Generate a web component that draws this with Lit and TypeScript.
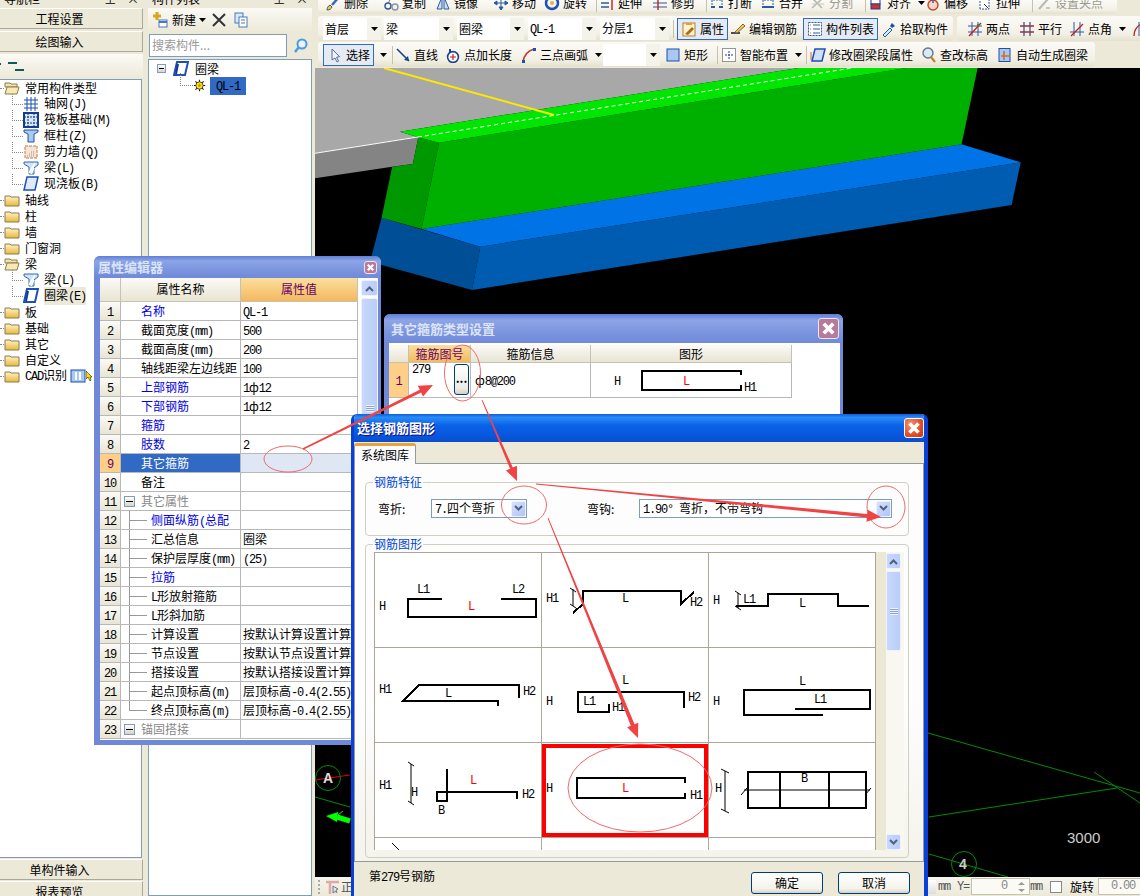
import { LitElement, html, svg, css, nothing } from "lit";
import { customElement } from "lit/decorators.js";

// latin runs get a narrow mono so they sit at 6px per char next to the 12px CJK
const lat = (text: string) =>
  text
    .split(/([\x20-\x7e°]+)/)
    .map((part, i) => (i % 2 ? html`<span class="m">${part}</span>` : part));

const ICONS: Record<string, any> = {
  brush: svg`<path d="M2 15c3 0 4-1 5-3l-2-2c-2 1-3 3-3 5z" fill="#f3c34d" stroke="#555"/><path d="M7 10 14 2" stroke="#3a66b8" stroke-width="2.5"/>`,
  scissor: svg`<circle cx="5" cy="11" r="3" fill="none" stroke="#33558f" stroke-width="1.4"/><circle cx="12" cy="12" r="3" fill="none" stroke="#8894a8" stroke-width="1.4"/><path d="M5 8 9 2" stroke="#777"/>`,
  mirror: svg`<path d="M7 2 2 14h5zM9 2l5 12H9z" fill="#cfe0f5" stroke="#2c5aa0"/>`,
  move: svg`<path d="M8 1v14M1 8h14M8 1 6 4h4zM8 15l-2-3h4zM1 8l3-2v4zM15 8l-3-2v4z" fill="#2c5aa0" stroke="#2c5aa0"/>`,
  rotate: svg`<circle cx="8" cy="8" r="6" fill="none" stroke="#1d4fb5" stroke-width="2.5"/><circle cx="8" cy="8" r="2" fill="#e9b23c"/>`,
  extend: svg`<path d="M2 4h8M2 8h8M2 12h8" stroke="#2c5aa0" stroke-width="1.4"/><path d="M13 1v14" stroke="#c02020" stroke-width="1.4"/>`,
  trim: svg`<path d="M1 4h14M1 8h14M1 12h14" stroke="#2c5aa0" stroke-width="1.2"/><path d="M6 1v14" stroke="#c02020" stroke-width="1.4"/>`,
  brk: svg`<path d="M2 12h4M10 12h4" stroke="#2c5aa0" stroke-width="2"/><path d="M3 10V5h10v5" fill="none" stroke="#2c5aa0" stroke-dasharray="2 1"/>`,
  join: svg`<path d="M2 12h12" stroke="#2c5aa0" stroke-width="2"/><path d="M3 10V5h10v5" fill="none" stroke="#2c5aa0" stroke-dasharray="2 1"/>`,
  split: svg`<path d="M2 13 13 3M3 4l9 9" stroke="#b8b8ae" stroke-width="1.6"/><path d="M2 9h12" stroke="#c8c8be"/>`,
  align: svg`<rect x="3" y="3" width="9" height="6" fill="#fff" stroke="#1d3f8f"/><rect x="3" y="9" width="9" height="5" fill="#d03030" stroke="#1d3f8f"/>`,
  offset: svg`<circle cx="8" cy="10" r="5" fill="#f8d9c8" stroke="#c04830" stroke-width="1.4"/><path d="M8 1v7" stroke="#2c5aa0" stroke-width="1.4"/>`,
  stretch: svg`<path d="M3 14V3h9v11z" fill="#fff" stroke="#2c5aa0" stroke-dasharray="2 1"/><path d="M7 9l4 4" stroke="#333"/>`,
  grip: svg`<path d="M3 14 12 4" stroke="#b8b8ae" stroke-width="2"/><path d="M10 13h4" stroke="#c8c8be" stroke-width="2"/>`,
  prop: svg`<rect x="2" y="2" width="12" height="13" fill="#fff3cf" stroke="#b08030"/><path d="M5 2h6v2H5z" fill="#e0a040"/><path d="M4 13 11 6l2 2-6 6z" fill="#b06a10"/>`,
  pencil: svg`<path d="M1 12h9" stroke="#222" stroke-width="1.6"/><path d="M5 11 13 3l2 2-8 7z" fill="#e9c46a" stroke="#8a6a20"/>`,
  list: svg`<rect x="1.5" y="1.5" width="13" height="13" fill="#fff" stroke="#2c5aa0" stroke-dasharray="2 1"/><path d="M6 4h7M6 8h7M6 12h7" stroke="#2c5aa0"/><path d="M3 4h1M3 8h1M3 12h1" stroke="#c08030"/>`,
  dropper: svg`<path d="M2 14 9 7l2 2-7 7z" fill="#cfe6fb" stroke="#2c5aa0"/><path d="M9 5l2-3 3 3-3 2z" fill="#1d4fb5"/>`,
  twopt: svg`<path d="M1 5h14M1 11h14M5 1v14M11 1v14" stroke="#2c5aa0"/><path d="M2 15 14 2" stroke="#c02020" stroke-width="1.3"/><rect x="10" y="3" width="2" height="2" fill="#2a9a2a"/>`,
  parallel: svg`<path d="M1 5h14M1 11h14" stroke="#c02020" stroke-width="1.3"/><path d="M5 1v14M11 1v14" stroke="#2c5aa0" stroke-width="1.3"/>`,
  ptangle: svg`<path d="M1 11h14M5 1v14M11 1v14" stroke="#2c5aa0"/><path d="M2 15 14 3" stroke="#c02020" stroke-width="1.3"/>`,
  arc3: svg`<path d="M3 15C3 8 8 2 15 2" fill="none" stroke="#c02020" stroke-width="1.3"/><path d="M8 1v14" stroke="#2c5aa0"/>`,
  cursor: svg`<path d="M5 2v11l3-2 2 4 1.6-.8-2-4 3-.5z" fill="#eef2fa" stroke="#5a6f90"/>`,
  line: svg`<path d="M2 2 14 14" stroke="#1d3f8f" stroke-width="1.6"/><path d="M14 14 9 13l4-4z" fill="#1d3f8f"/>`,
  ptadd: svg`<path d="M5 2v6" stroke="#1d3f8f" stroke-width="2"/><circle cx="8" cy="10" r="5.4" fill="#fff" stroke="#1d3f8f" stroke-width="1.6"/><path d="M8 7v6M5 10h6" stroke="#c02020" stroke-width="1.2"/>`,
  arc: svg`<path d="M2 15C3 8 6 4 13 2" fill="none" stroke="#c04030" stroke-width="1.8"/><rect x="1" y="13" width="3" height="3" fill="#1d4fb5"/><rect x="12" y="1" width="3" height="3" fill="#1d4fb5"/>`,
  rect: svg`<rect x="2" y="2" width="12" height="12" fill="#a8c8f0" stroke="#1d4fb5"/>`,
  smart: svg`<rect x="1.5" y="1.5" width="13" height="13" fill="#fff" stroke="#333" stroke-dasharray="1 1"/><path d="M8 4v8M4 8h8" stroke="#1d3f8f" stroke-dasharray="2 1"/>`,
  para: svg`<path d="M5 2h10l-3 12H2z" fill="#cfe0f5" stroke="#1d4fb5" stroke-width="1.5"/><path d="M1 5v8" stroke="#d06030"/>`,
  mag: svg`<circle cx="7" cy="6" r="5" fill="#dce8f5" stroke="#66788f" stroke-width="1.4"/><path d="M10 10l4 5" stroke="#b8862c" stroke-width="2.2"/>`,
  autogen: svg`<rect x="2" y="1.5" width="11" height="13" fill="#a8c8f0" stroke="#1d4fb5"/><path d="M7 4v9M4 9h9" stroke="#d07020" stroke-width="1.6"/>`,
  folder: svg`<path d="M1 4h5l1 1h8v9H1z" fill="url(#fold)" stroke="#8a7a50"/>`,
  folderOpen: svg`<path d="M1 3h5l1 1h6v3H1z" fill="#f3e3a8" stroke="#8a7a50"/><path d="M1 14l2-7h12l-2 7z" fill="#f7e9b0" stroke="#8a7a50"/>`,
  axis: svg`<path d="M1 4h14M1 8h14M1 12h14M4 1v14M8 1v14M12 1v14" stroke="#1d4fb5"/>`,
  raft: svg`<rect x="1" y="1" width="14" height="14" fill="#d8e6f8" stroke="#123e8a" stroke-width="2"/><path d="M1 5h14M1 11h14M5 1v14M11 1v14" stroke="#123e8a" stroke-dasharray="2 1"/>`,
  column: svg`<path d="M1 2h14v2l-4 2v8H5V6L1 4z" fill="#a8cbee" stroke="#1d4fb5"/>`,
  wall: svg`<rect x="2" y="2" width="12" height="12" fill="#f7e4d6" stroke="#c87840" stroke-dasharray="3 1"/><path d="M4 12h8M6 10h5M8 8h3" stroke="#999" stroke-dasharray="1 1"/>`,
  beam: svg`<path d="M1 2h14v3l-4 3v6H6V7L1 4z" fill="#cfe3f7" stroke="#2c6ab5"/><path d="M6 13 12 3M8 14l3-6" stroke="#fff" stroke-width="1.5"/>`,
  slab: svg`<path d="M4 1h11l-3 13H1z" fill="#dfeafa" stroke="#1d4fb5" stroke-width="1.5"/>`,
  ring: svg`<path d="M4 1h11l-3 13H1z" fill="#fff" stroke="#1d4fb5" stroke-width="2"/><path d="M3 13 5 3" stroke="#0d3a8f" stroke-width="2"/>`,
  gear: svg`<path d="M8 1v14M1 8h14M3 3l10 10M13 3 3 13" stroke="#222" stroke-width="1.4"/><circle cx="8" cy="8" r="4.500" fill="#ffe000" stroke="#333"/><circle cx="8" cy="8" r="1.500" fill="#a08a00"/>`,
  add: svg`<path d="M5 0v8M1 4h8" stroke="#d9a520" stroke-width="3"/><rect x="7" y="8" width="8" height="7" fill="#fff" stroke="#4b78b8"/><path d="M7 10h8" stroke="#4b78b8" stroke-width="2"/>`,
  cross: svg`<path d="M2 2 14 14M14 2 2 14" stroke="#333" stroke-width="2"/>`,
  dup: svg`<rect x="2" y="1" width="8" height="10" fill="#dbe8f8" stroke="#4b78b8"/><rect x="6" y="5" width="8" height="10" fill="#fff" stroke="#4b78b8"/><path d="M8 8h4M8 11h4" stroke="#4b78b8"/>`,
  search: svg`<circle cx="9" cy="6" r="4.500" fill="#e8f3fd" stroke="#4b9be0" stroke-width="2"/><path d="M6 9 2 14" stroke="#4b9be0" stroke-width="2.500"/>`,
  cad: svg`<rect x="1" y="2" width="14" height="12" fill="#a8c8f0" stroke="#1d4fb5"/><path d="M6 4v8M10 4v8" stroke="#fff" stroke-width="2"/>`,
  status: svg`<path d="M1 3h13M5 3v12" stroke="#e0a8a8" stroke-width="2.500"/><path d="M8 7v7l2-1.500 2 1-1-2.500 2-1z" fill="#dde3ee" stroke="#778"/>`,
};

const ic = (name: string, cls = "ic") =>
  html`<svg class=${cls} viewBox="0 0 16 16">${ICONS[name]}</svg>`;

const caret = html`<svg class="caret" viewBox="0 0 7 4"><path d="M0 0h7L3.500 4z" /></svg>`;

const chevron = (down: boolean) =>
  html`<svg class="chev" viewBox="0 0 9 7">
    <path d=${down ? "M1 1l3.500 3.500L8 1" : "M1 6l3.500-3.500L8 6"} fill="none" stroke="#4d6185" stroke-width="2" />
  </svg>`;

const spinner = html`<svg class="spn" viewBox="0 0 9 14"><path d="M4.500 2 8 5H1zM4.500 12 8 9H1z" fill="#999" /></svg>`;

type Tool = { i?: string; t?: string; w: number; sep?: boolean; caret?: boolean; on?: boolean; off?: boolean; sel?: string };

const ROW0: Tool[] = [
  { i: "brush", t: "删除", w: 58 }, { i: "scissor", t: "复制", w: 52 }, { i: "mirror", t: "镜像", w: 58 },
  { i: "move", t: "移动", w: 51 }, { i: "rotate", t: "旋转", w: 49 }, { sep: true, w: 6 },
  { i: "extend", t: "延伸", w: 53 }, { i: "trim", t: "修剪", w: 51 }, { sep: true, w: 6 },
  { i: "brk", t: "打断", w: 51 }, { i: "join", t: "合并", w: 50 }, { i: "split", t: "分割", w: 51, off: true }, { sep: true, w: 7 },
  { i: "align", t: "对齐", w: 57, caret: true }, { i: "offset", t: "偏移", w: 52 }, { i: "stretch", t: "拉伸", w: 51 }, { sep: true, w: 8 },
  { i: "grip", t: "设置夹点", w: 72, off: true },
];

const ROW1: Tool[] = [
  { sel: "首层", w: 58 }, { w: 3 }, { sel: "梁", w: 69 }, { w: 4 }, { sel: "圈梁", w: 67 }, { w: 4 },
  { sel: "QL-1", w: 68 }, { w: 4 }, { sel: "分层1", w: 69 }, { sep: true, w: 8 },
  { i: "prop", t: "属性", w: 51, on: true }, { w: 2 }, { i: "pencil", t: "编辑钢筋", w: 69 }, { w: 4 },
  { i: "list", t: "构件列表", w: 75, on: true }, { w: 3 }, { i: "dropper", t: "拾取构件", w: 69 },
];

const ROW1B: Tool[] = [
  { i: "twopt", t: "两点", w: 52 }, { i: "parallel", t: "平行", w: 50 },
  { i: "ptangle", t: "点角", w: 62, caret: true }, { i: "arc3", w: 18 },
];

const ROW2: Tool[] = [
  { i: "cursor", t: "选择", w: 51, on: true }, { w: 2 }, { t: "", w: 10, caret: true }, { w: 2 }, { sep: true, w: 7 },
  { i: "line", t: "直线", w: 50 }, { i: "ptadd", t: "点加长度", w: 76 }, { i: "arc", t: "三点画弧", w: 82, caret: true },
  { sel: "", w: 57 }, { w: 5 }, { i: "rect", t: "矩形", w: 48 }, { sep: true, w: 8 },
  { i: "smart", t: "智能布置", w: 81, caret: true }, { sep: true, w: 8 },
  { i: "para", t: "修改圈梁段属性", w: 111 }, { i: "mag", t: "查改标高", w: 76 }, { i: "autogen", t: "自动生成圈梁", w: 96 },
];

const NAV_TREE: { t: string; i: string; kind: string; cur?: boolean; cad?: boolean }[] = [
  { t: "常用构件类型", i: "folderOpen", kind: "root" },
  { t: "轴网(J)", i: "axis", kind: "kid" },
  { t: "筏板基础(M)", i: "raft", kind: "kid" },
  { t: "框柱(Z)", i: "column", kind: "kid" },
  { t: "剪力墙(Q)", i: "wall", kind: "kid" },
  { t: "梁(L)", i: "beam", kind: "kid" },
  { t: "现浇板(B)", i: "slab", kind: "kid" },
  { t: "轴线", i: "folder", kind: "root" },
  { t: "柱", i: "folder", kind: "root" },
  { t: "墙", i: "folder", kind: "root" },
  { t: "门窗洞", i: "folder", kind: "root" },
  { t: "梁", i: "folderOpen", kind: "root" },
  { t: "梁(L)", i: "beam", kind: "kid" },
  { t: "圈梁(E)", i: "ring", kind: "kid", cur: true },
  { t: "板", i: "folder", kind: "root" },
  { t: "基础", i: "folder", kind: "root" },
  { t: "其它", i: "folder", kind: "root" },
  { t: "自定义", i: "folder", kind: "root" },
  { t: "CAD识别", i: "folder", kind: "root", cad: true },
];

// kind: b = blue label, pick = current row, group = collapsible heading, c = child of heading, last = last child
const PROPS: [string, string, string][] = [
  ["名称", "QL-1", "b"],
  ["截面宽度(mm)", "500", ""],
  ["截面高度(mm)", "200", ""],
  ["轴线距梁左边线距", "100", ""],
  ["上部钢筋", "1ф12", "b"],
  ["下部钢筋", "1ф12", "b"],
  ["箍筋", "", "b"],
  ["肢数", "2", "b"],
  ["其它箍筋", "", "pick"],
  ["备注", "", ""],
  ["其它属性", "", "group"],
  ["侧面纵筋(总配", "", "b c"],
  ["汇总信息", "圈梁", "c"],
  ["保护层厚度(mm)", "(25)", "c"],
  ["拉筋", "", "b c"],
  ["L形放射箍筋", "", "c"],
  ["L形斜加筋", "", "c"],
  ["计算设置", "按默认计算设置计算", "c"],
  ["节点设置", "按默认节点设置计算", "c"],
  ["搭接设置", "按默认搭接设置计算", "c"],
  ["起点顶标高(m)", "层顶标高-0.4(2.55)", "c"],
  ["终点顶标高(m)", "层顶标高-0.4(2.55)", "c last"],
  ["锚固搭接", "", "group"],
];

type Shape = { bold?: string; thin?: string; texts?: [string, number, number, boolean?][]; sel?: boolean };

const SHAPES: Shape[] = [
  { bold: "M67 46H33V64H161V46H126", texts: [["H", 4, 54], ["L1", 42, 37], ["L2", 137, 37], ["L", 93, 54, true]] },
  { bold: "M31 60 41 51V38H139V51L152 39", thin: "M31 36V53M28 35l6 4M28 51l6 4", texts: [["H1", 4, 46], ["L", 80, 46], ["H2", 148, 50]] },
  { bold: "M27 53H59V41H129V53H160", thin: "M29 40V55M26 38l6 4M26 53l6 4", texts: [["H", 4, 48], ["L1", 34, 47], ["L", 90, 51]] },
  { bold: "M144 50V37H44L28 53H123V58", texts: [["H1", 4, 42], ["L", 70, 46], ["H2", 148, 44]] },
  { bold: "M142 60V44H36V64H67V56", texts: [["H", 4, 54], ["L", 80, 33], ["L1", 41, 54], ["H1", 70, 60], ["H2", 146, 50]] },
  { bold: "M114 67H35V42H161V61H86", texts: [["H", 4, 54], ["L", 90, 34], ["L1", 105, 52]] },
  { bold: "M72 26V58H62V49H142V56", thin: "M36 21V60M33 19l6 4M33 58l6 4", texts: [["H1", 4, 43], ["H", 36, 50], ["L", 95, 38, true], ["H2", 147, 52], ["B", 63, 68]] },
  { bold: "M143 40V35H35V55H143V50", sel: true, texts: [["H", 4, 46], ["L", 80, 46, true], ["H1", 148, 53]] },
  { bold: "M39 29H157V65H39ZM71 29V65M120 29V65", thin: "M16 28V68M12 26l8 4M12 66l8 4M35 47H161M32 52l6-7M156 52l6-7", texts: [["H", 6, 46], ["B", 92, 36]] },
  { thin: "M17 5l8 8" },
  {},
  {},
];

// tapered arrow with a filled head, the way the red markups in the shot look
const arrow = (x0: number, y0: number, x1: number, y1: number, w0: number, w1: number, hl = 14, hw = 6) => {
  const len = Math.hypot(x1 - x0, y1 - y0);
  const ux = (x1 - x0) / len;
  const uy = (y1 - y0) / len;
  const nx = -uy;
  const ny = ux;
  const bx = x1 - ux * hl;
  const by = y1 - uy * hl;
  const p = [
    [x0 + (nx * w0) / 2, y0 + (ny * w0) / 2],
    [bx + (nx * w1) / 2, by + (ny * w1) / 2],
    [bx + nx * hw, by + ny * hw],
    [x1, y1],
    [bx - nx * hw, by - ny * hw],
    [bx - (nx * w1) / 2, by - (ny * w1) / 2],
    [x0 - (nx * w0) / 2, y0 - (ny * w0) / 2],
  ];
  return svg`<polygon class="mark-fill" points=${p.map((q) => q.join(",")).join(" ")} />`;
};

@customElement("app-root")
export class AppRoot extends LitElement {
  static styles = css`
    :host {
      display: block;
      position: relative;
      width: 1140px;
      height: 896px;
      overflow: hidden;
      background: #ece9d8;
      color: #000;
      font: 12px/16px "Noto Sans CJK SC", "Liberation Sans", sans-serif;
    }
    .m {
      font-family: "Liberation Mono", monospace;
      font-size: 12px;
      letter-spacing: -1.2px;
    }
    .ic {
      width: 16px;
      height: 16px;
      flex: none;
    }
    .caret {
      width: 7px;
      height: 4px;
      flex: none;
      fill: #000;
    }
    .chev {
      width: 9px;
      height: 7px;
    }
    .app {
      display: grid;
      grid-template-columns: 143px 5px 164px 3px 825px;
      height: 896px;
    }

    /* docked panels */
    .panel {
      display: flex;
      flex-direction: column;
      min-height: 0;
      overflow: hidden;
    }
    .dock-title {
      display: flex;
      height: 8px;
      flex: none;
      overflow: hidden;
      line-height: 12px;
      padding-left: 4px;
    }
    .dock-title span {
      margin-top: -7px;
    }
    .dock-title b {
      font-weight: normal;
      margin: -7px 0 0 auto;
      word-spacing: 8px;
      padding-right: 4px;
    }
    .navbtn {
      height: 21px;
      flex: none;
      line-height: 20px;
      text-align: center;
      padding-right: 23px;
      border-top: 1px solid #fff;
      border-bottom: 1px solid #aca899;
      border-right: 1px solid #aca899;
      margin-bottom: 1px;
      box-sizing: border-box;
    }
    .navtop .navbtn {
      margin-bottom: 2px;
    }
    .nav-tools {
      height: 25px;
      flex: none;
      display: flex;
      align-items: center;
      background: linear-gradient(#fbfaf5, #ece9d8);
    }
    .nav-tools svg {
      width: 24px;
      height: 10px;
    }
    .tree {
      flex: 1;
      min-height: 0;
      background: #fff;
      border: 1px solid #7f9db9;
      border-left: none;
      margin-right: 1px;
      padding-top: 0;
      overflow: hidden;
    }
    .node {
      position: relative;
      display: flex;
      align-items: center;
      height: 16px;
      padding-left: 4px;
      gap: 5px;
      white-space: nowrap;
    }
    .node.kid {
      padding-left: 23px;
    }
    .node.kid::before {
      content: "";
      position: absolute;
      left: 12px;
      top: -2px;
      width: 10px;
      height: 10px;
      border-left: 1px dotted #888;
      border-bottom: 1px dotted #888;
    }
    .node.root::before {
      content: "";
      position: absolute;
      left: 0;
      top: 8px;
      width: 4px;
      border-top: 1px dotted #888;
    }
    .node .cur {
      background: #ece9d8;
    }
    .cad-mark {
      display: flex;
      align-items: center;
      margin-left: -2px;
    }
    .cad-mark svg + svg {
      width: 6px;
      height: 10px;
    }
    .navbottom {
      flex: none;
      padding-top: 1px;
      height: 37px;
    }

    .list-tools {
      height: 24px;
      flex: none;
      display: flex;
      align-items: center;
      padding-left: 4px;
      background: linear-gradient(#fbfaf5, #ece9d8);
    }
    .list-tools .new {
      margin: 0 3px 0 4px;
    }
    .list-tools .del {
      display: flex;
      margin: 0 6px 0 5px;
    }
    .search {
      height: 25px;
      flex: none;
      display: flex;
      align-items: center;
      margin-top: 1px;
    }
    .search .box {
      width: 138px;
      height: 23px;
      box-sizing: border-box;
      border: 1px solid #7f9db9;
      background: #fff;
      color: #999;
      line-height: 20px;
      padding-left: 2px;
      margin-left: 1px;
    }
    .search svg {
      margin-left: 6px;
    }
    .list-tree {
      flex: 1;
      background: #fff;
      border: 1px solid #7f9db9;
      margin-top: 1px;
    }
    .list-root,
    .list-kid {
      display: flex;
      align-items: center;
      height: 17px;
    }
    .list-root {
      padding-left: 8px;
    }
    .list-root .ic {
      margin: 0 6px 0 7px;
    }
    .minus {
      width: 9px;
      height: 9px;
      flex: none;
      box-sizing: border-box;
      border: 1px solid #7f9db9;
      background: linear-gradient(#fff, #d8d4c8) no-repeat;
      position: relative;
    }
    .minus::after {
      content: "";
      position: absolute;
      left: 1px;
      right: 1px;
      top: 3px;
      border-top: 1px solid #000;
    }
    .list-kid {
      position: relative;
      padding-left: 44px;
      gap: 4px;
    }
    .list-kid .ic {
      width: 13px;
      height: 13px;
    }
    .list-kid::before {
      content: "";
      position: absolute;
      left: 31px;
      top: -4px;
      width: 12px;
      height: 12px;
      border-left: 1px dotted #888;
      border-bottom: 1px dotted #888;
    }
    .list-kid span {
      background: #316ac5;
      padding: 0 3px;
      line-height: 16px;
    }

    /* toolbars */
    .work {
      display: flex;
      flex-direction: column;
      min-width: 0;
      overflow: hidden;
    }
    .tools {
      height: 68px;
      flex: none;
      overflow: hidden;
    }
    .bars {
      display: flex;
      gap: 4px;
      margin-left: 3px;
    }
    .bar {
      display: flex;
      align-items: center;
      height: 25px;
      flex: none;
      padding-left: 5px;
      border-radius: 3px;
      background: linear-gradient(#fbfaf6, #f3f1e6 70%, #e4e1cf);
      white-space: nowrap;
    }
    .bar0 {
      height: 14px;
      width: 792px;
      margin: 0 0 2px 3px;
      padding-left: 7px;
      overflow: hidden;
      border-radius: 0 0 3px 3px;
      align-items: flex-start;
    }
    .bar0 .tool {
      height: 18px;
      margin-top: -6px;
    }
    .bar0 .sep {
      height: 12px;
    }
    .row1-main {
      width: 630px;
    }
    .row1-side {
      flex: 1;
      padding-left: 10px;
      overflow: hidden;
      border-radius: 3px 0 0 3px;
    }
    .row2 {
      margin: 1px 0 0 3px;
      width: 772px;
    }
    .tool {
      display: flex;
      align-items: center;
      gap: 3px;
      flex: none;
      box-sizing: border-box;
      height: 22px;
    }
    .tool.on {
      border: 1px solid #316ac5;
      background: #e6ebf3;
      padding-left: 3px;
    }
    .tool.off {
      color: #9a9a90;
    }
    .tool .caret {
      margin-left: 4px;
    }
    .sep {
      flex: none;
      height: 18px;
      position: relative;
    }
    .sep::after {
      content: "";
      position: absolute;
      left: 50%;
      top: 0;
      bottom: 0;
      border-left: 1px solid #c5c2b0;
    }
    .sel {
      display: flex;
      align-items: center;
      flex: none;
      height: 22px;
      background: #fff;
      padding-left: 2px;
      box-sizing: border-box;
    }
    .sel span {
      flex: 1;
    }
    .sel i {
      width: 14px;
      height: 100%;
      display: flex;
      align-items: center;
      justify-content: center;
      background: #f4f3ea;
    }

    /* 3d view */
    .scene {
      display: block;
      width: 825px;
      height: 809px;
      flex: none;
      background: #000;
    }
    .scene text {
      font-family: "Liberation Sans", sans-serif;
    }
    .status {
      flex: 1;
      display: flex;
      align-items: center;
      background: linear-gradient(#f6f5ee, #ece9d8);
      padding-left: 3px;
      color: #555;
      overflow: hidden;
    }
    .status .ggrip {
      width: 2px;
      height: 14px;
      flex: none;
      border-left: 2px dotted #aaa;
      margin-right: 3px;
    }
    .tail {
      margin-left: auto;
      width: 212px;
      flex: none;
      display: flex;
      align-items: center;
      overflow: hidden;
      white-space: nowrap;
    }
    .tail .spin {
      width: 8px;
      height: 14px;
      background: linear-gradient(#fff, #ddd);
      flex: none;
    }
    .tail .u1 {
      margin: 0 7px 0 2px;
    }
    .tail .y {
      margin-right: 2px;
    }
    .tail .field {
      flex: none;
      height: 17px;
      box-sizing: border-box;
      border: 1px solid #c5c2b0;
      background: #fbfaf5;
      display: flex;
      align-items: center;
      justify-content: flex-end;
      color: #888;
      line-height: 15px;
      padding-right: 3px;
    }
    .tail .f1 {
      width: 59px;
    }
    .tail .f2 {
      width: 60px;
      margin-left: 4px;
    }
    .spn {
      width: 9px;
      height: 14px;
      margin-left: 10px;
      flex: none;
    }
    .tail .u2 {
      margin-right: 8px;
    }
    .tail .check {
      width: 12px;
      height: 12px;
      flex: none;
      border: 1px solid #888;
      background: #fff;
      box-sizing: border-box;
      margin-right: 8px;
    }
    .tail .rot {
      color: #000;
    }

    /* floating windows */
    .win {
      position: absolute;
      box-sizing: border-box;
      display: flex;
      flex-direction: column;
      border-radius: 6px 6px 0 0;
      overflow: hidden;
    }
    .win-title {
      flex: none;
      display: flex;
      align-items: center;
      justify-content: space-between;
      font-weight: bold;
      white-space: nowrap;
    }
    .inactive {
      background: #6f88da;
    }
    .inactive .win-title {
      background: linear-gradient(#5f7ed8, #8da5e6 22%, #7d96df 60%, #7089d9);
      color: #dbe3f7;
    }
    .x {
      display: block;
      flex: none;
      box-sizing: border-box;
      border-radius: 3px;
      border: 1px solid #e8e8f4;
      background: #b97a98;
    }
    .x path {
      stroke: #fff;
      stroke-width: 2.4;
    }

    .props {
      left: 94px;
      top: 256px;
      width: 287px;
      height: 489px;
      padding: 0 3px 5px 6px;
    }
    .props .win-title {
      height: 22px;
      margin: 0 -3px 0 -6px;
      padding: 0 4px 0 4px;
      font-size: 13px;
    }
    .props .x {
      width: 13px;
      height: 13px;
    }
    .props-body {
      flex: 1;
      min-height: 0;
      display: flex;
      background: #fff;
    }
    .ptable {
      width: 258px;
      flex: none;
      display: grid;
      grid-template-columns: 21px 120px 117px;
      grid-template-rows: 24px;
      grid-auto-rows: 19px;
    }
    .cell {
      position: relative;
      box-sizing: border-box;
      border-right: 1px solid #b8b8b8;
      border-bottom: 1px solid #b8b8b8;
      line-height: 18px;
      white-space: nowrap;
      overflow: hidden;
    }
    .hd {
      background: linear-gradient(#fbfaf5, #e8e5d4);
      text-align: center;
      line-height: 22px;
      border-color: #c5c2b0;
    }
    .hd.act {
      background: linear-gradient(#fbdf9d, #f4b860);
      color: #660066;
    }
    .num {
      background: linear-gradient(#fbfaf5, #e8e5d4);
      text-align: center;
    }
    .num.act {
      background: #ffcf87;
      color: #660066;
    }
    .name {
      padding-left: 20px;
    }
    .name.b {
      color: #0000e0;
    }
    .name.pick {
      background: #316ac5;
      color: #fff;
    }
    .name.c {
      padding-left: 30px;
    }
    .name.c::before {
      content: "";
      position: absolute;
      left: 8px;
      top: -1px;
      width: 17px;
      height: 10px;
      border-left: 1px solid #999;
      border-bottom: 1px solid #999;
    }
    .name.c:not(.last)::after {
      content: "";
      position: absolute;
      left: 8px;
      top: 9px;
      bottom: -1px;
      border-left: 1px solid #999;
    }
    .name.group {
      display: flex;
      align-items: center;
      gap: 6px;
      padding-left: 3px;
      color: #888;
    }
    .name.group .minus {
      width: 11px;
      height: 11px;
    }
    .name.group .minus::after {
      top: 4px;
    }
    .val {
      padding-left: 2px;
    }
    .val.pick {
      background: #dfe7f5;
    }
    .sbar {
      flex: none;
      display: flex;
      flex-direction: column;
      align-items: stretch;
      gap: 2px;
      box-sizing: border-box;
    }
    .sbtn,
    .thumb {
      box-sizing: border-box;
      border: 1px solid #eef2fd;
      border-radius: 2px;
      background: linear-gradient(90deg, #c9d8fb, #b9cdf9);
      flex: none;
    }
    .sbtn {
      height: 16px;
      display: flex;
      align-items: center;
      justify-content: center;
    }
    .thumb {
      display: flex;
      align-items: center;
      justify-content: center;
    }
    .thumb span {
      width: 8px;
      height: 7px;
      background: repeating-linear-gradient(#eef3fe 0 1px, #8aa2d8 1px 2px);
    }
    .props .sbar {
      width: 17px;
      margin: 2px 0 0 3px;
    }
    .props .thumb {
      height: 220px;
    }

    .stirrup {
      left: 384px;
      top: 314px;
      width: 459px;
      height: 200px;
      padding: 0 3px 0 5px;
      background: #7089d9;
    }
    .stirrup .win-title {
      height: 29px;
      margin: 0 -3px 0 -5px;
      padding: 0 4px 0 7px;
      font-size: 13px;
    }
    .stirrup .x {
      width: 21px;
      height: 21px;
    }
    .stirrup-body {
      flex: 1;
      background: #fff;
      padding-top: 2px;
    }
    .stable {
      display: grid;
      grid-template-columns: 20px 62px 120px 201px;
      grid-template-rows: 18px 35px;
    }
    .stable .hd {
      line-height: 17px;
    }
    .stable .num {
      background: #ffcf87;
      color: #660066;
      line-height: 33px;
    }
    .code {
      display: flex;
      padding: 0 1px 0 3px;
      line-height: 14px;
    }
    .more {
      margin: 1px 0 0 auto;
      width: 15px;
      height: 31px;
      box-sizing: border-box;
      border: 1px solid #003c74;
      border-radius: 3px;
      background: linear-gradient(#fff, #ecebe5 80%, #d6d0c5);
      font-weight: bold;
      text-align: center;
      line-height: 26px;
    }
    .info {
      padding-left: 4px;
      line-height: 33px;
    }
    .thumbshape {
      display: block;
      width: 200px;
      height: 34px;
    }
    .thumbshape text,
    .cellbox text {
      font: 12px "Liberation Mono", monospace;
      letter-spacing: -1.2px;
      dominant-baseline: central;
    }

    .picker {
      left: 351px;
      top: 414px;
      width: 577px;
      height: 482px;
      background: #ece9d8;
      border: solid #0a3fd8;
      border-width: 0 4px 0 3px;
    }
    .picker .win-title {
      height: 28px;
      margin: 0 -4px 0 -3px;
      padding: 0 4px 0 6px;
      font-size: 13px;
      color: #fff;
      text-shadow: 1px 1px #0f1089;
      background: linear-gradient(#0a5de0, #2a8cf5 12%, #0a63e8 40%, #0755dd 80%, #0a4ec8);
    }
    .picker .x {
      width: 20px;
      height: 20px;
      border: 1px solid #fff;
      background: radial-gradient(circle at 30% 30%, #f0926e, #dd4a22 65%, #c23a15);
      margin-right: 0;
    }
    .tabs {
      flex: none;
      height: 21px;
      display: flex;
      align-items: flex-end;
    }
    .tab {
      position: relative;
      width: 62px;
      height: 21px;
      box-sizing: border-box;
      border: 1px solid #919b9c;
      border-top: 3px solid #e8a33d;
      border-bottom: none;
      border-radius: 3px 3px 0 0;
      background: #fcfcfe;
      text-align: center;
      line-height: 17px;
      margin-bottom: -1px;
      z-index: 1;
    }
    .tabpanel {
      flex: none;
      height: 399px;
      box-sizing: border-box;
      border: 1px solid #919b9c;
      background: linear-gradient(#fdfdfe 60%, #f4f3ec);
      padding: 12px 14px 0 10px;
    }
    fieldset {
      margin: 0;
      padding: 0;
      border: 1px solid #d0d0bf;
      border-radius: 4px;
      min-width: 0;
    }
    legend {
      color: #0046d5;
      padding: 0 1px;
      margin-left: 7px;
      line-height: 12px;
      height: 12px;
    }
    .feat {
      height: 60px;
      box-sizing: border-box;
    }
    .feat-row {
      display: flex;
      align-items: center;
      height: 19px;
      margin: 11px 0 0 12px;
    }
    .feat-row label {
      width: 53px;
      flex: none;
    }
    .feat-row label.second {
      margin-left: 60px;
      width: 52px;
    }
    .combo {
      display: flex;
      align-items: center;
      height: 19px;
      box-sizing: border-box;
      border: 1px solid #7f9db9;
      background: #fff;
      padding-left: 3px;
    }
    .combo span {
      flex: 1;
    }
    .combo i {
      width: 15px;
      height: 16px;
      display: flex;
      align-items: center;
      justify-content: center;
      border: 1px solid #eef2fd;
      box-sizing: border-box;
      border-radius: 2px;
      background: linear-gradient(135deg, #d6e1fd, #afc4f7);
    }
    .lib {
      height: 320px;
      box-sizing: border-box;
      margin-top: 2px;
    }
    .lib-row {
      display: flex;
      padding: 2px 0 0 8px;
    }
    .gallery {
      width: 502px;
      height: 298px;
      flex: none;
      overflow: hidden;
      display: grid;
      grid-template-columns: repeat(3, 167px);
      grid-auto-rows: 95px;
      border-right: 1px solid #aca899;
      background: #fff;
      box-sizing: border-box;
    }
    .cellbox {
      position: relative;
      border-left: 1px solid #aca899;
      border-top: 1px solid #aca899;
      box-sizing: border-box;
    }
    .cellbox svg {
      display: block;
      width: 166px;
      height: 94px;
    }
    .cellbox.picked::after {
      content: "";
      position: absolute;
      inset: 1px 0 0 0;
      border: 4px solid #f00;
    }
    .bold {
      fill: none;
      stroke: #000;
      stroke-width: 2;
      shape-rendering: crispEdges;
    }
    .thin {
      fill: none;
      stroke: #000;
    }
    .redtxt {
      fill: #f00;
    }
    .lib-track {
      width: 28px;
      height: 298px;
      flex: none;
      display: flex;
      background: linear-gradient(90deg, #ebe8d6 10px, #f8f7f0 10px);
      padding-top: 1px;
      box-sizing: border-box;
    }
    .lib-track .sbar {
      width: 15px;
      height: 100%;
      margin-left: 10px;
    }
    .lib-track .sbtn {
      height: 16px;
    }
    .lib-track .thumb {
      height: 80px;
    }
    .lib-track .sbtn.end {
      margin-top: auto;
    }
    .foot {
      flex: 1;
      display: flex;
      align-items: flex-start;
      padding: 10px 14px 0 15px;
      gap: 15px;
    }
    .foot span {
      margin: -4px auto 0 0;
    }
    .foot button {
      width: 72px;
      height: 22px;
      padding: 0;
      border: 1px solid #003c74;
      border-radius: 3px;
      background: linear-gradient(#fff, #f3f2ea 80%, #d6d0c5);
      font: inherit;
      line-height: 18px;
      color: #000;
    }

    /* red markups drawn over everything */
    .marks {
      position: absolute;
      left: 0;
      top: 0;
      width: 1140px;
      height: 896px;
      pointer-events: none;
    }
    .marks ellipse {
      fill: none;
      stroke: #ee6a6a;
    }
    .mark-fill {
      fill: #f04444;
    }
  `;

  renderTool(t: Tool) {
    if (t.sep) return html`<div class="sep" style="width:${t.w}px"></div>`;
    if (t.sel !== undefined) {
      return html`<div class="sel" style="width:${t.w}px"><span>${lat(t.sel)}</span><i>${caret}</i></div>`;
    }
    if (!t.i && !t.caret) return html`<div style="width:${t.w}px;flex:none"></div>`;
    return html`<div class="tool ${t.on ? "on" : ""} ${t.off ? "off" : ""}" style="width:${t.w}px">
      ${t.i ? ic(t.i) : nothing}${t.t ? html`<span>${t.t}</span>` : nothing}${t.caret ? caret : nothing}
    </div>`;
  }

  renderNav() {
    return html`<div class="panel">
      <div class="dock-title"><span>导航栏</span><b>⊥ ×</b></div>
      <div class="navtop">
        <div class="navbtn">工程设置</div>
        <div class="navbtn">绘图输入</div>
      </div>
      <div class="nav-tools">
        <svg viewBox="0 0 24 10"><path d="M0 2h1M8 1h9M15 8h9" stroke="#0e5a5a" stroke-width="2" /></svg>
      </div>
      <div class="tree">
        ${NAV_TREE.map(
          (n) => html`<div class="node ${n.kind}">
            ${ic(n.i)}<span class=${n.cur ? "cur" : ""}>${lat(n.t)}</span>
            ${n.cad
              ? html`<span class="cad-mark">${ic("cad")}<svg viewBox="0 0 6 10"><path d="M0 0v8l2-2 2 4 1-1-1-3h2z" fill="#ffd800" stroke="#000" stroke-width=".5" /></svg></span>`
              : nothing}
          </div>`
        )}
      </div>
      <div class="navbottom">
        <div class="navbtn">单构件输入</div>
        <div class="navbtn">报表预览</div>
      </div>
    </div>`;
  }

  renderList() {
    return html`<div class="panel">
      <div class="dock-title"><span>构件列表</span><b>⊥ ×</b></div>
      <div class="list-tools">
        ${ic("add")}<span class="new">新建</span>${caret}
        <span class="del">${ic("cross")}</span>${ic("dup")}
      </div>
      <div class="search"><div class="box">搜索构件...</div>${ic("search")}</div>
      <div class="list-tree">
        <div class="list-root"><i class="minus"></i>${ic("ring")}<span>圈梁</span></div>
        <div class="list-kid">${ic("gear")}<span>${lat("QL-1")}</span></div>
      </div>
    </div>`;
  }

  renderScene() {
    return html`<svg class="scene" viewBox="315 68 825 809">
      <g transform="translate(315 60) scale(.4592 .3333)">
        <polygon points="0,24 1053,24 185,215 225,232 0,280" fill="#a8a8a8" />
        <polygon points="0,280 225,232 213,312 168,320 0,355" fill="#848484" />
        <polygon points="145,473 360,560 342,690 120,605" fill="#004f96" />
        <polygon points="360,560 1537,307 1517,435 342,690" fill="#005cb0" />
        <polygon points="232,507 1408,253 1537,307 360,560" fill="#0073e6" />
        <polygon points="225,232 270,248 232,507 145,473 168,320 213,312" fill="#009800" />
        <polygon points="270,248 1288,24 1443,24 1408,253 232,507" fill="#00b000" />
        <polygon points="185,215 1053,24 1288,24 270,248 225,232" fill="#00e600" />
      </g>
      <path d="M315 153.300 418 137" stroke="#fff" />
      <path d="M418 137 852 68" stroke="#fff" stroke-dasharray="4 3" />
      <path d="M384 68 554 115" stroke="#ffe800" stroke-width="2" />

      <g fill="none" stroke="#008c00">
        <path d="M928 733 1140 793M929 817 1117 788M1094 772 1140 803M929 854 1008 877M315 797 350 807" />
        <circle cx="964" cy="864" r="12.500" />
        <circle cx="328" cy="778" r="12.500" />
      </g>
      <path d="M315 780 350 775" stroke="#e00000" />
      <text x="959" y="869" font-size="14" font-weight="bold" fill="#ccc">4</text>
      <text x="323" y="783" font-size="14" font-weight="bold" fill="#ddd">A</text>
      <text x="1067" y="843" font-size="15" fill="#ccc">3000</text>
      <polygon points="326,816 338,812 337,822" fill="#0f0" />
      <path d="M337 817 350 821" stroke="#0f0" stroke-width="5" />
      <path d="M338 815 343 811" stroke="#0f0" />
    </svg>`;
  }

  renderStatus() {
    return html`<div class="status">
      <i class="ggrip"></i>${ic("status")}<span>正</span>
      <div class="tail">
        <i class="spin"></i><span class="m u1">mm</span>
        <span class="m y">Y=</span>
        <span class="field f1"><span class="m">0</span>${spinner}</span>
        <span class="m u2">mm</span>
        <i class="check"></i><span class="rot">旋转</span>
        <span class="field f2"><span class="m">0.00</span>${spinner}</span>
      </div>
    </div>`;
  }

  renderClose() {
    return html`<svg class="x" viewBox="0 0 12 12"><path d="M3 3l6 6M9 3l-6 6" /></svg>`;
  }

  renderProps() {
    return html`<div class="win inactive props">
      <div class="win-title"><span>属性编辑器</span>${this.renderClose()}</div>
      <div class="props-body">
        <div class="ptable">
          <div class="cell hd"></div>
          <div class="cell hd">属性名称</div>
          <div class="cell hd act">属性值</div>
          ${PROPS.map(([name, value, kind], i) => {
            const pick = kind === "pick";
            const group = kind === "group";
            return html`
              <div class="cell num ${pick ? "act" : ""}"><span class="m">${i + 1}</span></div>
              <div class="cell name ${kind}">
                ${group ? html`<i class="minus"></i>` : nothing}${lat(name)}
              </div>
              <div class="cell val ${pick ? "pick" : ""}">${lat(value)}</div>
            `;
          })}
        </div>
        <div class="sbar">
          <div class="sbtn">${chevron(false)}</div>
          <div class="thumb"><span></span></div>
        </div>
      </div>
    </div>`;
  }

  renderStirrup() {
    return html`<div class="win inactive stirrup">
      <div class="win-title"><span>其它箍筋类型设置</span>${this.renderClose()}</div>
      <div class="stirrup-body">
        <div class="stable">
          <div class="cell hd"></div>
          <div class="cell hd act">箍筋图号</div>
          <div class="cell hd">箍筋信息</div>
          <div class="cell hd">图形</div>
          <div class="cell num"><span class="m">1</span></div>
          <div class="cell code"><span class="m">279</span><div class="more">...</div></div>
          <div class="cell info">${lat("ф8@200")}</div>
          <div class="cell">
            <svg class="thumbshape" viewBox="0 0 200 34">
              <path class="bold" d="M150 12V8H51V27H150V22" />
              <text x="23" y="19">H</text>
              <text class="redtxt" x="92" y="19">L</text>
              <text x="153" y="25">H1</text>
            </svg>
          </div>
        </div>
      </div>
    </div>`;
  }

  renderPicker() {
    return html`<div class="win picker">
      <div class="win-title"><span>选择钢筋图形</span>${this.renderClose()}</div>
      <div class="tabs"><div class="tab">系统图库</div></div>
      <div class="tabpanel">
        <fieldset class="feat">
          <legend>钢筋特征</legend>
          <div class="feat-row">
            <label>弯折:</label>
            <div class="combo" style="width:96px"><span>${lat("7.四个弯折")}</span><i>${chevron(true)}</i></div>
            <label class="second">弯钩:</label>
            <div class="combo" style="width:253px"><span>${lat("1.90° 弯折，不带弯钩")}</span><i>${chevron(true)}</i></div>
          </div>
        </fieldset>
        <fieldset class="lib">
          <legend>钢筋图形</legend>
          <div class="lib-row">
            <div class="gallery">
              ${SHAPES.map(
                (s) => html`<div class="cellbox ${s.sel ? "picked" : ""}">
                  <svg viewBox="0 0 166 94">
                    ${s.thin ? svg`<path class="thin" d=${s.thin} />` : nothing}
                    ${s.bold ? svg`<path class="bold" d=${s.bold} />` : nothing}
                    ${(s.texts ?? []).map(
                      ([t, x, y, red]) => svg`<text class=${red ? "redtxt" : ""} x=${x} y=${y}>${t}</text>`
                    )}
                  </svg>
                </div>`
              )}
            </div>
            <div class="lib-track">
              <div class="sbar">
                <div class="sbtn">${chevron(false)}</div>
                <div class="thumb"><span></span></div>
                <div class="sbtn end">${chevron(true)}</div>
              </div>
            </div>
          </div>
        </fieldset>
      </div>
      <div class="foot">
        <span>${lat("第279号钢筋")}</span>
        <button>确定</button>
        <button>取消</button>
      </div>
    </div>`;
  }

  render() {
    return html`
      <svg width="0" height="0" style="position:absolute">
        <defs>
          <linearGradient id="fold" x1="0" y1="0" x2="0" y2="1">
            <stop offset="0" stop-color="#fff3c4" />
            <stop offset="1" stop-color="#e8b93a" />
          </linearGradient>
        </defs>
      </svg>
      <div class="app">
        ${this.renderNav()}
        <div></div>
        ${this.renderList()}
        <div></div>
        <div class="work">
          <div class="tools">
            <div class="bar bar0">${ROW0.map((t) => this.renderTool(t))}</div>
            <div class="bars">
              <div class="bar row1-main">${ROW1.map((t) => this.renderTool(t))}</div>
              <div class="bar row1-side">${ROW1B.map((t) => this.renderTool(t))}</div>
            </div>
            <div class="bar row2">${ROW2.map((t) => this.renderTool(t))}</div>
          </div>
          ${this.renderScene()} ${this.renderStatus()}
        </div>
      </div>
      ${this.renderProps()} ${this.renderStirrup()} ${this.renderPicker()}
      <svg class="marks" viewBox="0 0 1140 896">
        <ellipse cx="288" cy="459" rx="24" ry="13" />
        <ellipse cx="462.500" cy="373" rx="18" ry="28" />
        <ellipse cx="524" cy="505" rx="22.500" ry="19" />
        <ellipse cx="886" cy="507" rx="19" ry="21" />
        <ellipse cx="640" cy="788" rx="72" ry="44" />
        ${arrow(303, 449, 433, 385, 1.5, 3)}
        ${arrow(482, 400, 517, 481, 0.8, 3)}
        ${arrow(536, 484, 881, 517, 0.8, 3.5)}
        ${arrow(548, 518, 638, 738, 0.8, 4)}
      </svg>
    `;
  }
}
